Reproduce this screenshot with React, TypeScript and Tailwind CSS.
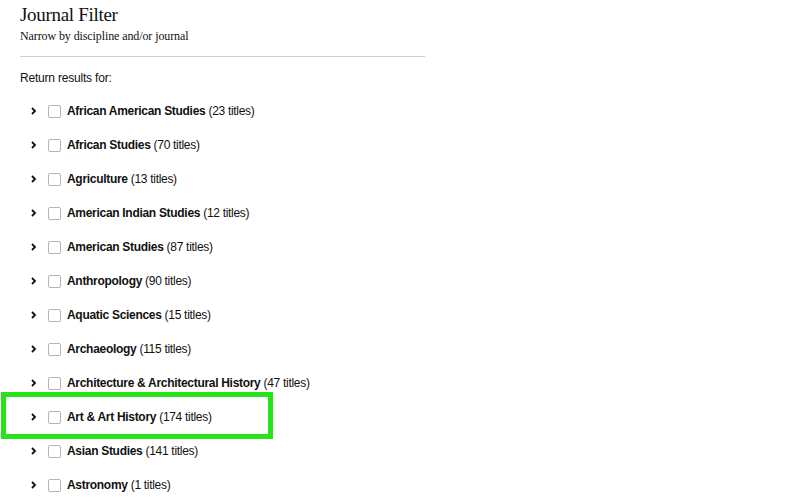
import { ReactNode } from "react";

const disciplines: [string, number][] = [
  ["African American Studies", 23],
  ["African Studies", 70],
  ["Agriculture", 13],
  ["American Indian Studies", 12],
  ["American Studies", 87],
  ["Anthropology", 90],
  ["Aquatic Sciences", 15],
  ["Archaeology", 115],
  ["Architecture & Architectural History", 47],
  ["Art & Art History", 174],
  ["Asian Studies", 141],
  ["Astronomy", 1],
];

function Chevron() {
  return (
    <svg width="6" height="8" viewBox="0 0 6 8" className="shrink-0">
      <path d="M1 1l3 3-3 3" fill="none" stroke="#111" strokeWidth="1.8" />
    </svg>
  );
}

function Row({ name, count, highlight }: { name: string; count: number; highlight?: boolean }) {
  return (
    <div className="relative flex h-[34px] items-center">
      {highlight && (
        <div className="pointer-events-none absolute left-[-19px] top-[-8px] h-[47px] w-[272px] border-[5px] border-[#27e31a]" />
      )}
      <div className="ml-[11px] w-[17px]">
        <Chevron />
      </div>
      <span className="h-[13px] w-[13px] rounded-[2px] border border-[#b5b5b5] bg-white" />
      <label className="ml-[6px] text-[12px] tracking-[-0.3px] text-[#111]">
        <span className="font-bold">{name}</span> ({count} titles)
      </label>
    </div>
  );
}

function Header({ children }: { children: ReactNode }) {
  return <div className="border-b border-[#d0d0d0] pb-[12px]">{children}</div>;
}

export default function App() {
  return (
    <div className="min-h-[502px] w-[807px] bg-white pl-[20px] pt-[3px] font-['Liberation_Sans',Arial,sans-serif]">
      <div className="w-[405px]">
        <Header>
          <h2 className="font-['Liberation_Serif',serif] text-[19px] leading-[24px] tracking-[-0.3px] text-[#111]">
            Journal Filter
          </h2>
          <p className="mt-[1px] font-['Liberation_Serif',serif] text-[12px] leading-[16px] tracking-[-0.1px] text-[#111]">
            Narrow by discipline and/or journal
          </p>
        </Header>
        <p className="mt-[13px] text-[12px] leading-[16px] tracking-[-0.2px] text-[#111]">Return results for:</p>
        <div className="mt-[8px]">
          {disciplines.map(([name, count]) => (
            <Row key={name} name={name} count={count} highlight={name === "Art & Art History"} />
          ))}
        </div>
      </div>
    </div>
  );
}
